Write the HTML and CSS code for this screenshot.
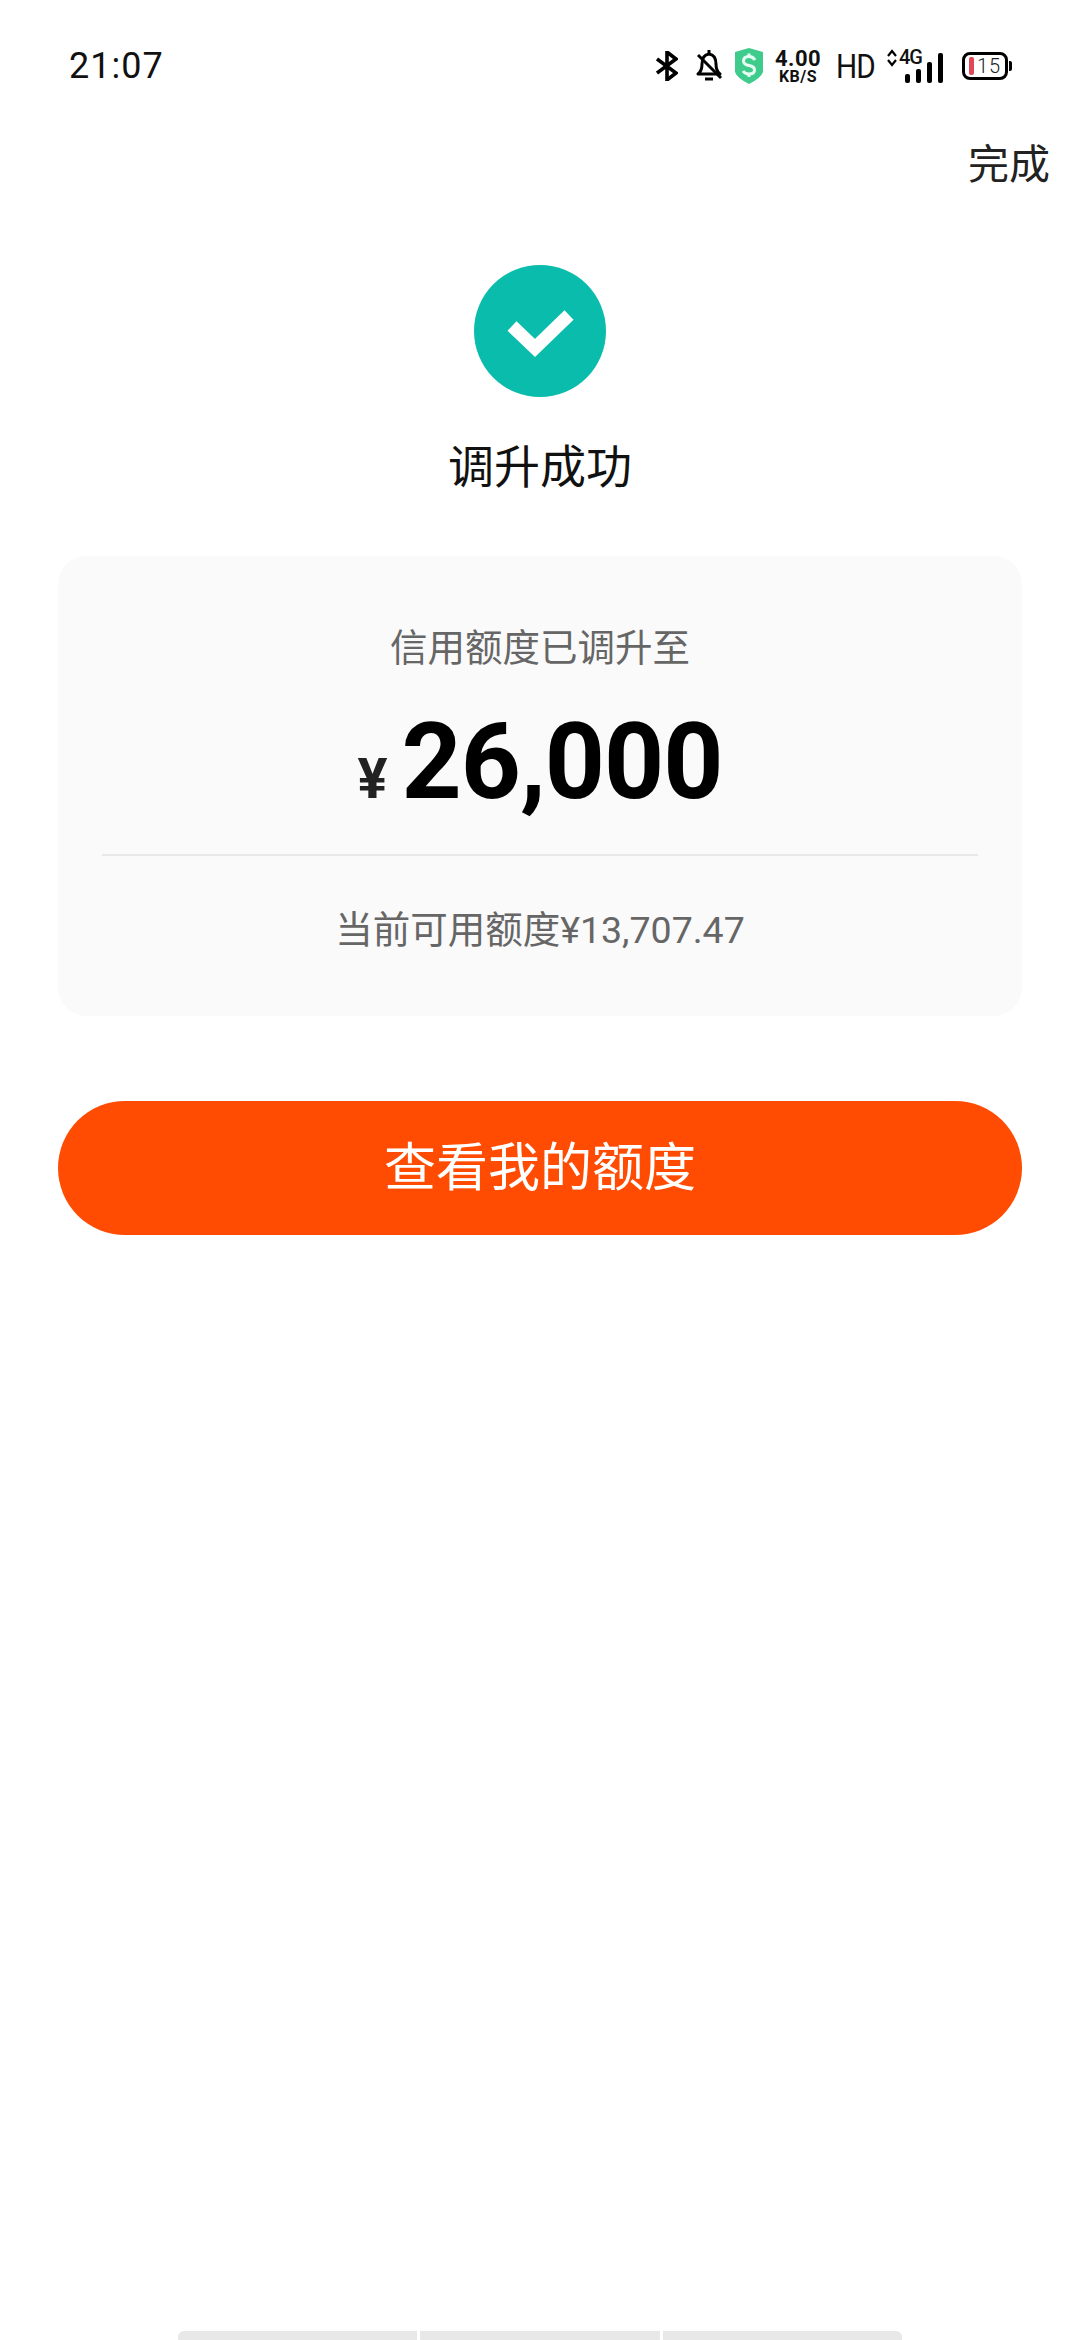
FILE: index.html
```html
<!DOCTYPE html>
<html lang="zh-CN">
<head>
  <meta charset="UTF-8">
  <meta name="viewport" content="width=device-width, initial-scale=1.0">
  <title>调升成功</title>
  <link rel="stylesheet" href="styles.css">
</head>
<body>
  <div class="status">
    <span class="time">21:07</span>
    <div class="status-icons">
      <svg class="ic-bt" width="22" height="30" viewBox="0 0 22 30"><path d="M1 8 L20 22 L11 29 V1 L20 8 L1 22" fill="none" stroke="#000" stroke-width="3.600"/></svg>
      <svg class="ic-bell" width="28" height="36" viewBox="0 0 28 36"><path d="M3 26 Q7 23 7 16 Q7 7 14 6 Q21 7 21 16 Q21 23 25 26 Z" fill="none" stroke="#000" stroke-width="3" stroke-linejoin="round"/><path d="M14 2 V6 M10 31 H18" stroke="#000" stroke-width="3"/><path d="M3 7 L26 30" stroke="#000" stroke-width="3"/></svg>
      <svg class="ic-shield" width="28" height="36" viewBox="0 0 28 36"><path d="M0 4 L14 0 L28 4 V24 Q26 30 14 36 Q2 30 0 24 Z" fill="#3ecb8c"/><path d="M20 12 Q18 8.500 14 8.500 Q8.500 8.500 8.500 13 Q8.500 16.500 14 17.500 Q19.500 18.500 19.500 22 Q19.500 26 14 26 Q10 26 8 23 M14 5.500 V8.500 M14 26 V29" fill="none" stroke="#e6fff3" stroke-width="3"/></svg>
      <div class="speed"><b>4.00</b><b class="unit">KB/S</b></div>
      <span class="hd">HD</span>
      <div class="net">
        <svg class="arrows" width="10" height="18" viewBox="0 0 10 18"><path d="M1 7 L5 2 L9 7 M1 11 L5 16 L9 11" fill="none" stroke="#000" stroke-width="2.200"/></svg>
        <span class="net-type">4G</span>
        <div class="bars">
          <i class="bar b1"></i><i class="bar b2"></i><i class="bar b3"></i><i class="bar b4"></i>
        </div>
      </div>
      <div class="battery">
        <i class="battery-level"></i><span>15</span>
      </div>
    </div>
  </div>

  <div class="top-action"><span>完成</span></div>

  <div class="result">
    <svg width="132" height="132" viewBox="0 0 132 132">
      <circle cx="66" cy="66" r="66" fill="#0abcab"/>
      <path d="M38 61 L61 83 L95 50" fill="none" stroke="#fff" stroke-width="13"/>
    </svg>
    <p class="result-title">调升成功</p>
  </div>

  <div class="card">
    <p class="card-label">信用额度已调升至</p>
    <p class="amount"><span class="yen">¥</span>26,000</p>
    <div class="line"></div>
    <p class="card-label avail">当前可用额度<span class="num">¥13,707.47</span></p>
  </div>

  <button class="btn">查看我的额度</button>

  <div class="bottom-bar">
    <i></i><i></i><i></i>
  </div>
</body>
</html>
```

FILE: styles.css
```css
html, body {
  margin: 0;
  padding: 0;
}
body {
  width: 1080px;
  height: 2340px;
  overflow: hidden;
  background-color: #fff;
  display: flex;
  flex-direction: column;
  font-family: Roboto, "Noto Sans CJK SC", sans-serif;
}
p {
  margin: 0;
}
.status {
  height: 132px;
  box-sizing: border-box;
  padding: 0 68px 0 69px;
  display: flex;
  justify-content: space-between;
  align-items: center;
}
.time {
  font-size: 36px;
  letter-spacing: 1px;
  color: #111;
}
.status-icons {
  display: flex;
  align-items: center;
}
.ic-bt {
  margin-right: 17px;
}
.ic-bell {
  margin-right: 12px;
}
.ic-shield {
  margin-right: 11px;
}
.speed {
  width: 48px;
  display: flex;
  flex-direction: column;
  align-items: center;
  margin-right: 14px;
  color: #111;
}
.speed b {
  font-size: 22px;
  line-height: 20px;
  letter-spacing: 0.5px;
}
.speed .unit {
  font-size: 16px;
  line-height: 15px;
}
.hd {
  width: 36px;
  font-size: 33px;
  letter-spacing: -1px;
  white-space: nowrap;
  transform: scaleX(0.9);
  transform-origin: left center;
  color: #111;
  margin-right: 15px;
}
.net {
  width: 56px;
  height: 34px;
  position: relative;
  margin-right: 19px;
}
.arrows {
  position: absolute;
  left: 0;
  top: 0;
}
.net-type {
  position: absolute;
  left: 12px;
  top: -4px;
  font-weight: 500;
  font-size: 20px;
  letter-spacing: -1px;
  color: #111;
}
.bars {
  position: absolute;
  right: 0;
  bottom: 0;
  display: flex;
  align-items: flex-end;
  gap: 6px;
}
.bar {
  width: 5px;
  background-color: #000;
  border-radius: 2px;
}
.b1 { height: 9px; }
.b2 { height: 14px; }
.b3 { height: 21px; }
.b4 { height: 30px; }
.battery {
  width: 46px;
  height: 28px;
  box-sizing: border-box;
  border: 3px solid #000;
  border-radius: 8px;
  position: relative;
  display: flex;
  align-items: center;
  padding-left: 4px;
  gap: 3px;
  margin-right: 4px;
}
.battery::after {
  content: "";
  position: absolute;
  right: -7px;
  top: 6px;
  width: 3px;
  height: 10px;
  background-color: #000;
  border-radius: 0 2px 2px 0;
}
.battery-level {
  width: 5px;
  height: 18px;
  background-color: #e0475a;
  border-radius: 2px;
}
.battery span {
  font-size: 20px;
  font-weight: 300;
  line-height: 20px;
  letter-spacing: 1px;
  color: #222;
}
.top-action {
  display: flex;
  justify-content: flex-end;
  padding-right: 30px;
  height: 64px;
  align-items: center;
  font-size: 41px;
  color: #222;
  margin-top: -3px;
}
.result {
  margin-top: 72px;
  display: flex;
  flex-direction: column;
  align-items: center;
}
.result-title {
  margin-top: 38px;
  font-size: 46px;
  line-height: 64px;
  color: #111;
}
.card {
  margin: 57px 58px 0;
  height: 460px;
  box-sizing: border-box;
  padding: 67px 44px 0;
  background-color: #fafafa;
  border-radius: 28px;
  display: flex;
  flex-direction: column;
  align-items: center;
}
.card-label {
  font-size: 37.5px;
  line-height: 50px;
  color: #666;
}
.amount {
  margin-top: 32px;
  font-size: 105px;
  line-height: 116px;
  font-weight: bold;
  letter-spacing: -1px;
  color: #000;
}
.yen {
  font-size: 56px;
  color: #222;
  margin-right: 15px;
}
.line {
  align-self: stretch;
  height: 2px;
  background-color: #e8e8e8;
  margin-top: 17px;
}
.avail {
  margin-top: 49px;
}
.btn {
  margin: 85px 58px 0;
  height: 134px;
  padding: 0 0 10px;
  border: none;
  border-radius: 67px;
  background-color: #ff4c02;
  color: #fff;
  font-family: inherit;
  font-size: 52px;
}
.bottom-bar {
  margin: auto 178px 0;
  height: 9px;
  display: flex;
  gap: 3px;
}
.bottom-bar i {
  flex: 1;
  background-color: #e8e8e8;
}
.bottom-bar i:first-child {
  border-radius: 6px 0 0 0;
}
.bottom-bar i:last-child {
  border-radius: 0 6px 0 0;
}
```
